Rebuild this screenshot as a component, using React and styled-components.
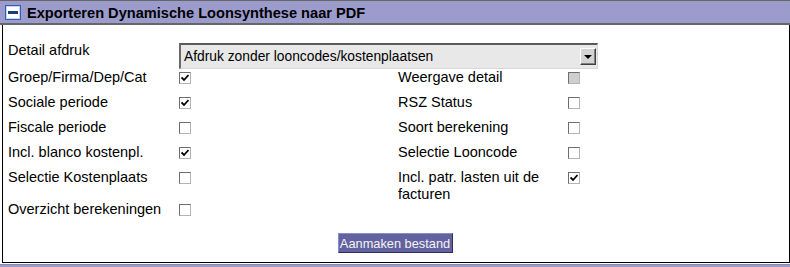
import { Fragment } from 'react';
import styled, { createGlobalStyle } from 'styled-components';

const GlobalStyle = createGlobalStyle`
    body {
        margin: 0;
        background: #fff;
        font-family: "Liberation Sans", Arial, sans-serif;
    }`

const Panel = styled.div`
    width: 790px;`

const Header = styled.div`
    height: 25px;
    box-sizing: border-box;
    background: #9c9ccc;
    border-top: 1px solid #666;
    border-bottom: 2px solid #666;
    display: flex;
    align-items: center;
    padding-left: 5px;
    gap: 6px;`

const Toggle = styled.div`
    width: 16px;
    height: 15px;
    box-sizing: border-box;
    background: #fff;
    border: 1px solid #2f5fb8;
    box-shadow: inset 0 0 0 1px #c8d4ee;
    display: flex;
    align-items: center;
    justify-content: center;

    &::after {
        content: '';
        width: 10px;
        height: 3px;
        background: #1d3c7c;
    }`

const Title = styled.div`
    font-weight: bold;
    font-size: 14.6px;
    color: #000;
    margin-top: 1px;`

const Body = styled.div`
    margin-left: 2px;
    height: 238px;
    box-sizing: border-box;
    border: 1px solid #000;
    border-top: 0;
    padding: 17px 0 0 5px;
    display: flex;
    flex-direction: column;`

const Form = styled.div`
    display: grid;
    grid-template-columns: 171px 219px 170px 1fr;
    grid-template-rows: 27px 25px 25px 25px 25px 32px 16px;
    font-size: 14.5px;
    line-height: 16px;
    color: #000;`

const Label = styled.div`
    line-height: ${p => p.$tall ? '17px' : '16px'};`

const Select = styled.div`
    grid-column: 2 / 5;
    width: 419px;
    height: 26px;
    margin-top: 1px;
    box-sizing: border-box;
    background: #e8e8e8;
    border-top: 2px solid #5a5a5a;
    border-left: 2px solid #6a6a6a;
    border-right: 1px solid #d8d8d8;
    border-bottom: 1px solid #d8d8d8;
    display: flex;
    align-items: center;
    justify-content: space-between;
    padding: 0 0 0 3px;
    font-size: 13.8px;`

const Arrow = styled.div`
    width: 16px;
    height: 17px;
    box-sizing: border-box;
    background: #d4d4d4;
    border-top: 1px solid #fff;
    border-left: 1px solid #fff;
    border-right: 1px solid #404040;
    border-bottom: 1px solid #404040;
    box-shadow: inset -1px -1px 0 #808080;
    display: flex;
    align-items: center;
    justify-content: center;
    margin-right: 1px;

    &::after {
        content: '';
        border-left: 4px solid transparent;
        border-right: 4px solid transparent;
        border-top: 4px solid #000;
        margin: 1px 1px 0 0;
    }`

const Check = styled.div`
    width: 12px;
    height: 12px;
    margin-top: 3px;
    box-sizing: border-box;
    background: ${p => p.$disabled ? '#cfcfcf' : '#fff'};
    border-top: 1px solid #6e6e6e;
    border-left: 1px solid #6e6e6e;
    border-right: 1px solid #b4b4b4;
    border-bottom: 1px solid #b4b4b4;
    display: flex;
    align-items: center;
    justify-content: center;`

const Footer = styled.div`
    display: flex;
    justify-content: center;
    margin-top: 16px;
    padding-right: 7px;`

const Button = styled.button`
    height: 20px;
    width: 115px;
    box-sizing: border-box;
    padding: 0;
    background: #62629e;
    color: #f4f4f4;
    font-family: "Liberation Sans", Arial, sans-serif;
    font-size: 12.8px;
    border-top: 1px solid #8a8ad6;
    border-left: 1px solid #8a8ad6;
    border-right: 1px solid #2e2e5c;
    border-bottom: 1px solid #2e2e5c;`

const NextHeader = styled.div`
    height: 3px;
    margin-top: 1px;
    background: #9c9ccc;
    border-top: 1px solid #8a8aa8;`

const rows = [
    ['Groep/Firma/Dep/Cat', true, 'Weergave detail', 'disabled'],
    ['Sociale periode', true, 'RSZ Status', false],
    ['Fiscale periode', false, 'Soort berekening', false],
    ['Incl. blanco kostenpl.', true, 'Selectie Looncode', false],
    ['Selectie Kostenplaats', false, 'Incl. patr. lasten uit de facturen', true],
    ['Overzicht berekeningen', false, null, null],
];

function Box({ value }) {
    return (
        <Check $disabled={value === 'disabled'}>
            {value === true ? (
                <svg width="8" height="8" viewBox="0 0 8 8">
                    <path d="M0.5 3.5 L3 6 L7.5 1" fill="none" stroke="#000" strokeWidth="1.8" />
                </svg>
            ) : null}
        </Check>
    )
}

export default function App() {
    return (
        <>
            <GlobalStyle />
            <Panel>
                <Header>
                    <Toggle />
                    <Title>Exporteren Dynamische Loonsynthese naar PDF</Title>
                </Header>
                <Body>
                    <Form>
                        <Label>Detail afdruk</Label>
                        <Select>
                            Afdruk zonder looncodes/kostenplaatsen
                            <Arrow />
                        </Select>
                        {rows.map(([l1, c1, l2, c2]) => (
                            <Fragment key={l1}>
                                <Label>{l1}</Label>
                                <div><Box value={c1} /></div>
                                <Label $tall={l2 && l2.length > 25}>{l2}</Label>
                                <div>{l2 ? <Box value={c2} /> : null}</div>
                            </Fragment>
                        ))}
                    </Form>
                    <Footer>
                        <Button>Aanmaken bestand</Button>
                    </Footer>
                </Body>
                <NextHeader />
            </Panel>
        </>
    )
}
